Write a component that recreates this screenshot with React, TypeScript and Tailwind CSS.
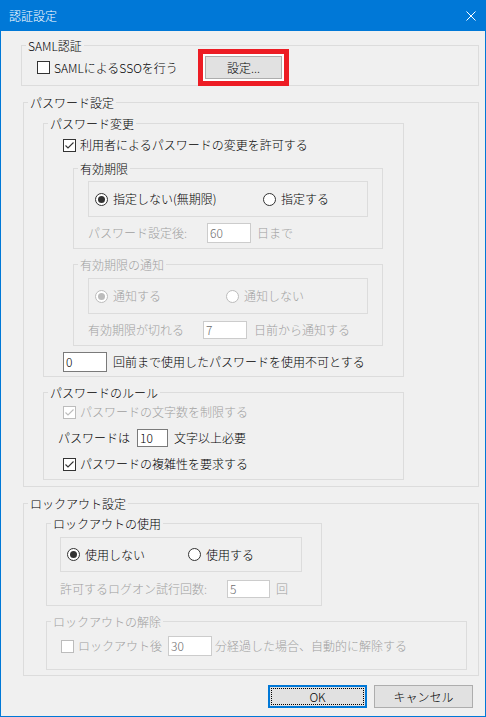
import type { ReactNode } from "react";

const GRAY = "text-[#a0a0a0]";

function GroupBox({ title, className, disabled, children }: { title: string; className: string; disabled?: boolean; children: ReactNode }) {
  return (
    <fieldset className={`border border-[#dcdcdc] ${className}`}>
      <legend className={`ml-[4px] px-[2px] text-[12px] leading-[15px] ${disabled ? GRAY : "text-black"}`}>{title}</legend>
      {children}
    </fieldset>
  );
}

function CheckBox({ checked, disabled }: { checked?: boolean; disabled?: boolean }) {
  return (
    <span className={`flex h-[13px] w-[13px] shrink-0 items-center justify-center border bg-white ${disabled ? "border-[#bcbcbc]" : "border-[#333333]"}`}>
      {checked && (
        <svg width="11" height="11" viewBox="0 0 11 11">
          <polyline points="1.5,5.5 4,8 9.5,2.5" fill="none" stroke={disabled ? "#bcbcbc" : "#333333"} strokeWidth="1.1" />
        </svg>
      )}
    </span>
  );
}

function Radio({ checked, disabled }: { checked?: boolean; disabled?: boolean }) {
  return (
    <span className={`flex h-[13px] w-[13px] shrink-0 items-center justify-center rounded-full border bg-white ${disabled ? "border-[#bcbcbc]" : "border-[#333333]"}`}>
      {checked && <span className={`h-[7px] w-[7px] rounded-full ${disabled ? "bg-[#bcbcbc]" : "bg-[#333333]"}`} />}
    </span>
  );
}

function TextBox({ value, disabled, className }: { value: string; disabled?: boolean; className: string }) {
  return (
    <span className={`flex shrink-0 items-center border bg-white pl-[2px] text-[12px] ${disabled ? "border-[#cccccc] text-[#6d6d6d]" : "border-[#7a7a7a] text-black"} ${className}`}>
      {value}
    </span>
  );
}

function RadioItem({ label, checked, disabled, className }: { label: string; checked?: boolean; disabled?: boolean; className?: string }) {
  return (
    <span className={`flex items-center gap-[5px] ${disabled ? GRAY : "text-black"} ${className ?? ""}`}>
      <Radio checked={checked} disabled={disabled} />
      {label}
    </span>
  );
}

function CheckItem({ label, checked, disabled, className }: { label: string; checked?: boolean; disabled?: boolean; className?: string }) {
  return (
    <span className={`flex items-center gap-[4px] ${disabled ? GRAY : "text-black"} ${className ?? ""}`}>
      <CheckBox checked={checked} disabled={disabled} />
      {label}
    </span>
  );
}

export default function App() {
  return (
    <div className="flex h-[717px] w-[486px] flex-col overflow-hidden border-x border-b border-[#0078d7] bg-[#f0f0f0] font-['Noto_Sans_CJK_JP','Noto_Sans',sans-serif] text-[12px] font-light leading-[16px] text-black">
      {/* title bar */}
      <div className="-mx-px flex h-[31px] shrink-0 items-center justify-between bg-[#0078d7] pl-[9px] pr-[10px] text-white">
        <span>認証設定</span>
        <svg width="10" height="10" viewBox="0 0 10 10">
          <path d="M0.5 0.5 L9.5 9.5 M9.5 0.5 L0.5 9.5" stroke="#ffffff" strokeWidth="1" />
        </svg>
      </div>

      {/* SAML */}
      <GroupBox title="SAML認証" className="ml-[20px] mr-[6px] mt-[7px]">
        <div className="flex h-[23px] items-center pl-[15px] mt-[3px] mb-[6px]">
          <CheckItem label="SAMLによるSSOを行う" className="w-[168px]" />
          <span className="relative">
            <button className="flex h-[23px] w-[77px] items-center justify-center border border-[#adadad] bg-[#e1e1e1] text-[12px]">設定...</button>
            <span className="pointer-events-none absolute -inset-[7px] border-[5px] border-[#ed1c24] shadow-[inset_0_0_0_2px_#ffffff]" />
          </span>
        </div>
      </GroupBox>

      {/* password */}
      <GroupBox title="パスワード設定" className="ml-[22px] mr-[6px] mt-[9px]">
        <div className="flex flex-col pb-[6px]">
          <GroupBox title="パスワード変更" className="ml-[19px] mt-[6px] w-[361px]">
            <div className="flex flex-col pb-[4px]">
              <CheckItem label="利用者によるパスワードの変更を許可する" checked className="ml-[19px] mt-[6px] h-[16px]" />

              <GroupBox title="有効期限" className="ml-[29px] mt-[8px] w-[310px]">
                <div className="flex flex-col pb-[5px]">
                  <div className="ml-[14px] mt-[5px] flex h-[36px] w-[280px] items-center border border-[#dcdcdc] pl-[6px]">
                    <RadioItem label="指定しない(無期限)" checked className="w-[168px]" />
                    <RadioItem label="指定する" />
                  </div>
                  <div className={`ml-[14px] mt-[6px] flex h-[20px] items-center ${GRAY}`}>
                    <span className="w-[119px]">パスワード設定後:</span>
                    <TextBox value="60" disabled className="h-[20px] w-[44px]" />
                    <span className="ml-[6px]">日まで</span>
                  </div>
                </div>
              </GroupBox>

              <GroupBox title="有効期限の通知" disabled className="ml-[29px] mt-[8px] w-[310px]">
                <div className="flex flex-col pb-[6px]">
                  <div className="ml-[14px] mt-[6px] flex h-[36px] w-[280px] items-center border border-[#dcdcdc] pl-[6px]">
                    <RadioItem label="通知する" checked disabled className="w-[131px]" />
                    <RadioItem label="通知しない" disabled />
                  </div>
                  <div className={`ml-[14px] mt-[7px] flex h-[18px] items-center ${GRAY}`}>
                    <span className="w-[115px]">有効期限が切れる</span>
                    <TextBox value="7" disabled className="h-[18px] w-[44px]" />
                    <span className="ml-[7px]">日前から通知する</span>
                  </div>
                </div>
              </GroupBox>

              <div className="ml-[19px] mt-[6px] flex h-[20px] items-center">
                <TextBox value="0" className="h-[20px] w-[44px]" />
                <span className="ml-[6px]">回前まで使用したパスワードを使用不可とする</span>
              </div>
            </div>
          </GroupBox>

          <GroupBox title="パスワードのルール" className="ml-[19px] mt-[8px] w-[361px]">
            <div className="flex flex-col pb-[7px]">
              <CheckItem label="パスワードの文字数を制限する" checked disabled className="ml-[19px] mt-[4px] h-[16px]" />
              <div className="ml-[14px] mt-[9px] flex h-[18px] items-center">
                <span className="w-[79px]">パスワードは</span>
                <TextBox value="10" className="h-[18px] w-[31px]" />
                <span className="ml-[6px]">文字以上必要</span>
              </div>
              <CheckItem label="パスワードの複雑性を要求する" checked className="ml-[19px] mt-[9px] h-[16px]" />
            </div>
          </GroupBox>
        </div>
      </GroupBox>

      {/* lockout */}
      <GroupBox title="ロックアウト設定" className="ml-[22px] mr-[6px] mt-[9px]">
        <div className="flex flex-col pb-[5px]">
          <GroupBox title="ロックアウトの使用" className="ml-[22px] mt-[5px] w-[276px]">
            <div className="flex flex-col pb-[7px]">
              <div className="ml-[13px] mt-[6px] flex h-[35px] w-[242px] items-center border border-[#dcdcdc] pl-[6px]">
                <RadioItem label="使用しない" checked className="w-[121px]" />
                <RadioItem label="使用する" />
              </div>
              <div className={`ml-[13px] mt-[8px] flex h-[18px] items-center ${GRAY}`}>
                <span className="w-[167px]">許可するログオン試行回数:</span>
                <TextBox value="5" disabled className="h-[18px] w-[43px]" />
                <span className="ml-[6px]">回</span>
              </div>
            </div>
          </GroupBox>

          <GroupBox title="ロックアウトの解除" disabled className="ml-[22px] mt-[8px] w-[421px]">
            <div className={`ml-[14px] mb-[13px] mt-[7px] flex h-[20px] items-center ${GRAY}`}>
              <CheckItem label="ロックアウト後" disabled className="w-[107px]" />
              <TextBox value="30" disabled className="h-[20px] w-[44px]" />
              <span className="ml-[3px]">分経過した場合、自動的に解除する</span>
            </div>
          </GroupBox>
        </div>
      </GroupBox>

      {/* buttons */}
      <div className="mt-[9px] flex">
        <button className="ml-[267px] flex h-[23px] w-[99px] items-center justify-center border-2 border-[#0078d7] bg-[#e1e1e1] text-[12px] outline-1 -outline-offset-4 outline-black outline-dotted">OK</button>
        <button className="ml-[7px] flex h-[23px] w-[99px] items-center justify-center border border-[#adadad] bg-[#e1e1e1] text-[12px]">キャンセル</button>
      </div>
    </div>
  );
}
